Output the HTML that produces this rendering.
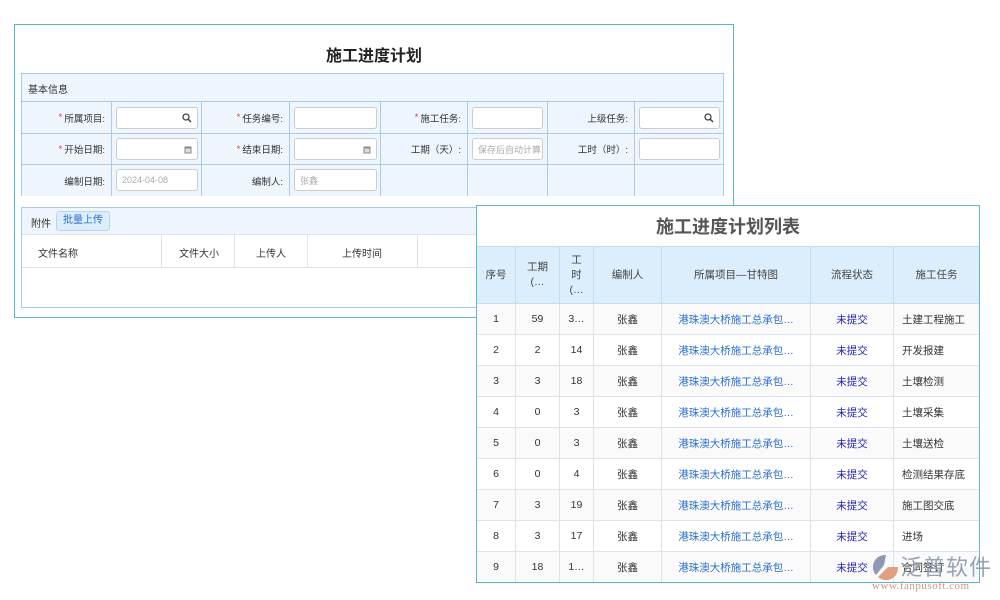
<!DOCTYPE html>
<html><head><meta charset="utf-8"><style>
*{box-sizing:border-box;margin:0;padding:0}
body{width:1000px;height:600px;background:#fff;position:relative;overflow:hidden;font-family:"Liberation Sans","Noto Sans CJK SC",sans-serif;font-size:10px;color:#333}
.abs{position:absolute}
.p1{left:14px;top:24px;width:720px;height:294px;border:1px solid #5cb8c8;background:#fff}
.t1{left:0;top:17px;width:100%;text-align:center;font-size:16px;font-weight:bold;color:#222}
.sec{border:1px solid #a9cbe6;background:#eef5fc}
.cell{position:absolute;border-right:1px solid #a9cbe6;border-bottom:1px solid #a9cbe6;display:flex;align-items:center;justify-content:flex-end;padding-right:6px;font-size:9.5px;color:#333;background:#eef5fc}
.in{position:absolute;background:#fff;border:1px solid #ccc;border-radius:3px;font-size:9px;color:#aaa;padding-left:5px;display:flex;align-items:center}
.st{color:#e33;margin-right:2px}
.p2{left:476px;top:205px;width:504px;height:378px;border:1px solid #5cb8c8;background:#fff;overflow:hidden}
table{border-collapse:collapse;position:absolute;left:-1px;top:40px;width:504px;table-layout:fixed}
td,th{border:1px solid #dde3ea;text-align:center;font-size:10.5px;height:31px;white-space:nowrap;overflow:hidden}
th{background:#dcedfb;font-weight:normal;color:#444;height:57px;line-height:15px;border-color:#c5dcee}
tr:nth-child(even) td{background:#fafafa}
.lk{color:#2d6fd0}.wt{color:#2222bb}.l{text-align:left;padding-left:8px}
</style></head><body>
<div class="abs p1">
 <div class="abs t1">施工进度计划</div>
 <div class="abs sec" style="left:6px;top:48px;width:703px;height:123px">
  <div class="abs" style="left:6px;top:7px;font-size:10px">基本信息</div>
  <div class="abs" style="left:0;top:27px;width:701px;height:94px;background:#eef5fc;border-top:1px solid #a9cbe6">
   <div class="cell" style="left:0;top:0;width:90px;height:32px"><span class="st">*</span>所属项目:</div>
   <div class="cell" style="left:90px;top:0;width:90px;height:32px"></div>
   <div class="cell" style="left:180px;top:0;width:88px;height:32px"><span class="st">*</span>任务编号:</div>
   <div class="cell" style="left:268px;top:0;width:91px;height:32px"></div>
   <div class="cell" style="left:359px;top:0;width:87px;height:32px"><span class="st">*</span>施工任务:</div>
   <div class="cell" style="left:446px;top:0;width:80px;height:32px"></div>
   <div class="cell" style="left:526px;top:0;width:87px;height:32px">上级任务:</div>
   <div class="cell" style="left:613px;top:0;width:88px;height:32px;border-right:none"></div>
   <div class="cell" style="left:0;top:32px;width:90px;height:31px"><span class="st">*</span>开始日期:</div>
   <div class="cell" style="left:90px;top:32px;width:90px;height:31px"></div>
   <div class="cell" style="left:180px;top:32px;width:88px;height:31px"><span class="st">*</span>结束日期:</div>
   <div class="cell" style="left:268px;top:32px;width:91px;height:31px"></div>
   <div class="cell" style="left:359px;top:32px;width:87px;height:31px">工期（天）:</div>
   <div class="cell" style="left:446px;top:32px;width:80px;height:31px"></div>
   <div class="cell" style="left:526px;top:32px;width:87px;height:31px">工时（时）:</div>
   <div class="cell" style="left:613px;top:32px;width:88px;height:31px;border-right:none"></div>
   <div class="cell" style="left:0;top:63px;width:90px;height:31px;border-bottom:none">编制日期:</div>
   <div class="cell" style="left:90px;top:63px;width:90px;height:31px;border-bottom:none"></div>
   <div class="cell" style="left:180px;top:63px;width:88px;height:31px;border-bottom:none">编制人:</div>
   <div class="cell" style="left:268px;top:63px;width:91px;height:31px;border-bottom:none"></div>
   <div class="cell" style="left:359px;top:63px;width:87px;height:31px;border-bottom:none"></div>
   <div class="cell" style="left:446px;top:63px;width:80px;height:31px;border-bottom:none"></div>
   <div class="cell" style="left:526px;top:63px;width:87px;height:31px;border-bottom:none"></div>
   <div class="cell" style="left:613px;top:63px;width:88px;height:31px;border:none"></div>
   <div class="in" style="left:94px;top:5px;width:82px;height:22px;justify-content:flex-end;padding-right:5px"><svg width="10" height="10" viewBox="0 0 10 10"><circle cx="4" cy="4" r="3" fill="none" stroke="#444" stroke-width="1.3"/><path d="M6.2 6.2L9 9" stroke="#444" stroke-width="1.5"/></svg></div>
   <div class="in" style="left:272px;top:5px;width:83px;height:22px"></div>
   <div class="in" style="left:450px;top:5px;width:71px;height:22px"></div>
   <div class="in" style="left:617px;top:5px;width:81px;height:22px;justify-content:flex-end;padding-right:5px"><svg width="10" height="10" viewBox="0 0 10 10"><circle cx="4" cy="4" r="3" fill="none" stroke="#444" stroke-width="1.3"/><path d="M6.2 6.2L9 9" stroke="#444" stroke-width="1.5"/></svg></div>
   <div class="in" style="left:94px;top:36px;width:82px;height:22px;justify-content:flex-end;padding-right:5px"><svg width="8" height="9" viewBox="0 0 8 9"><rect x="0.5" y="1.5" width="7" height="7" fill="#888"/><rect x="1.5" y="3.5" width="5" height="4" fill="#ddd"/></svg></div>
   <div class="in" style="left:272px;top:36px;width:83px;height:22px;justify-content:flex-end;padding-right:5px"><svg width="8" height="9" viewBox="0 0 8 9"><rect x="0.5" y="1.5" width="7" height="7" fill="#888"/><rect x="1.5" y="3.5" width="5" height="4" fill="#ddd"/></svg></div>
   <div class="in" style="left:450px;top:36px;width:71px;height:22px;overflow:hidden;white-space:nowrap">保存后自动计算</div>
   <div class="in" style="left:617px;top:36px;width:81px;height:22px"></div>
   <div class="in" style="left:94px;top:67px;width:82px;height:22px">2024-04-08</div>
   <div class="in" style="left:272px;top:67px;width:83px;height:22px">张鑫</div>
  </div>
 </div>
 <div class="abs" style="left:6px;top:182px;width:703px;height:101px;border:1px solid #a9cbe6;background:#fff">
  <div class="abs" style="left:0;top:0;width:701px;height:27px;background:#eef5fc;border-bottom:1px solid #dde3ea"></div>
  <div class="abs" style="left:9px;top:7px">附件</div>
  <div class="abs" style="left:34px;top:3px;width:54px;height:20px;background:#dcedfb;border:1px solid #b8d6ef;border-radius:3px;color:#2d6fd0;text-align:center;line-height:18px">批量上传</div>
  <div class="abs" style="left:0;top:27px;width:701px;height:33px;border-bottom:1px solid #dde3ea"></div>
  <div class="abs" style="left:139px;top:27px;height:33px;border-left:1px solid #dde3ea"></div>
  <div class="abs" style="left:212px;top:27px;height:33px;border-left:1px solid #dde3ea"></div>
  <div class="abs" style="left:285px;top:27px;height:33px;border-left:1px solid #dde3ea"></div>
  <div class="abs" style="left:395px;top:27px;height:33px;border-left:1px solid #dde3ea"></div>
  <div class="abs" style="left:16px;top:37px">文件名称</div>
  <div class="abs" style="left:157px;top:37px">文件大小</div>
  <div class="abs" style="left:234px;top:37px">上传人</div>
  <div class="abs" style="left:320px;top:37px">上传时间</div>
 </div>
</div>
<div class="abs p2">
 <div class="abs" style="left:0;top:7px;width:100%;text-align:center;font-size:18px;font-weight:bold;color:#555">施工进度计划列表</div>
 <table>
  <colgroup><col style="width:39px"><col style="width:44px"><col style="width:34px"><col style="width:68px"><col style="width:149px"><col style="width:83px"><col></colgroup>
  <tr><th>序号</th><th>工期<br>(…</th><th>工<br>时<br>(…</th><th>编制人</th><th>所属项目—甘特图</th><th>流程状态</th><th>施工任务</th></tr>
  <tr><td>1</td><td>59</td><td>3…</td><td>张鑫</td><td class="lk">港珠澳大桥施工总承包…</td><td class="wt">未提交</td><td class="l">土建工程施工</td></tr>
  <tr><td>2</td><td>2</td><td>14</td><td>张鑫</td><td class="lk">港珠澳大桥施工总承包…</td><td class="wt">未提交</td><td class="l">开发报建</td></tr>
  <tr><td>3</td><td>3</td><td>18</td><td>张鑫</td><td class="lk">港珠澳大桥施工总承包…</td><td class="wt">未提交</td><td class="l">土壤检测</td></tr>
  <tr><td>4</td><td>0</td><td>3</td><td>张鑫</td><td class="lk">港珠澳大桥施工总承包…</td><td class="wt">未提交</td><td class="l">土壤采集</td></tr>
  <tr><td>5</td><td>0</td><td>3</td><td>张鑫</td><td class="lk">港珠澳大桥施工总承包…</td><td class="wt">未提交</td><td class="l">土壤送检</td></tr>
  <tr><td>6</td><td>0</td><td>4</td><td>张鑫</td><td class="lk">港珠澳大桥施工总承包…</td><td class="wt">未提交</td><td class="l">检测结果存底</td></tr>
  <tr><td>7</td><td>3</td><td>19</td><td>张鑫</td><td class="lk">港珠澳大桥施工总承包…</td><td class="wt">未提交</td><td class="l">施工图交底</td></tr>
  <tr><td>8</td><td>3</td><td>17</td><td>张鑫</td><td class="lk">港珠澳大桥施工总承包…</td><td class="wt">未提交</td><td class="l">进场</td></tr>
  <tr><td>9</td><td>18</td><td>1…</td><td>张鑫</td><td class="lk">港珠澳大桥施工总承包…</td><td class="wt">未提交</td><td class="l">合同签订</td></tr>
 </table>
</div>
<svg class="abs" style="left:872px;top:553px" width="28" height="28" viewBox="0 0 28 28"><path d="M14 2 A12 12 0 0 0 4 22 L12 12 Z" fill="#8d99b0"/><path d="M6 24 A12 12 0 0 0 26 14 L16 14 Z" fill="#e0a080"/></svg>
<div class="abs" style="left:900px;top:550px;font-size:22px;color:#8d99b0;opacity:.9;letter-spacing:1px">泛普软件</div>
<div class="abs" style="left:872px;top:580px;font-size:11px;color:#d9907a;font-family:'Liberation Serif',serif;letter-spacing:.5px">www.fanpusoft.com</div>
</body></html>
